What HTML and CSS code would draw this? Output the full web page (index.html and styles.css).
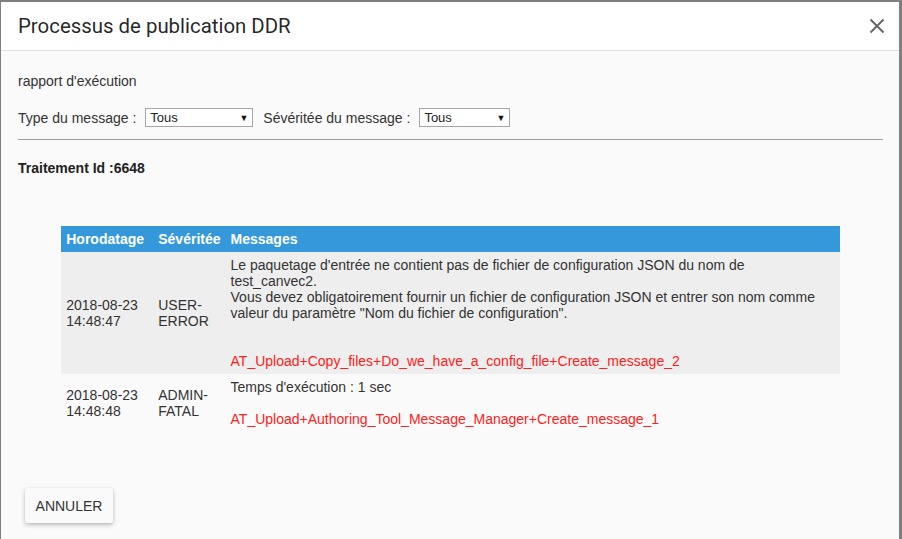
FILE: index.html
```html
<!DOCTYPE html>
<html lang="fr">
<head>
<meta charset="utf-8">
<title>Processus de publication DDR</title>
<link rel="stylesheet" href="styles.css">
</head>
<body>
<div class="dialog">
  <div class="dlg-header">
    <h2 class="dlg-title">Processus de publication DDR</h2>
    <button class="close-btn" aria-label="Fermer">
      <svg width="16" height="16" viewBox="0 0 16 16"><path d="M1.5 1.5 L14.5 14.5 M14.5 1.5 L1.5 14.5" stroke="#666" stroke-width="2" fill="none"/></svg>
    </button>
  </div>
  <div class="dlg-body">
    <div class="report-title">rapport d'exécution</div>
    <div class="filters">
      <span class="flabel">Type du message :</span>
      <div class="fselect sel-type"><span>Tous</span><span class="arrow">▼</span></div>
      <span class="flabel">Sévéritée du message :</span>
      <div class="fselect sel-sev"><span>Tous</span><span class="arrow">▼</span></div>
    </div>
    <hr class="sep">
    <div class="traitement">Traitement Id :6648</div>
    <table class="log">
      <thead>
        <tr><th class="c-date">Horodatage</th><th class="c-sev">Sévéritée</th><th>Messages</th></tr>
      </thead>
      <tbody>
        <tr class="odd">
          <td class="mid">2018-08-23<br>14:48:47</td>
          <td class="mid">USER-<br>ERROR</td>
          <td>Le paquetage d'entrée ne contient pas de fichier de configuration JSON du nom de<br>test_canvec2.<br>Vous devez obligatoirement fournir un fichier de configuration JSON et entrer son nom comme<br>valeur du paramètre "Nom du fichier de configuration".<br><br><br><span class="trace">AT_Upload+Copy_files+Do_we_have_a_config_file+Create_message_2</span></td>
        </tr>
        <tr>
          <td class="mid">2018-08-23<br>14:48:48</td>
          <td class="mid">ADMIN-<br>FATAL</td>
          <td>Temps d'exécution : 1 sec<br><br><span class="trace">AT_Upload+Authoring_Tool_Message_Manager+Create_message_1</span></td>
        </tr>
      </tbody>
    </table>
    <div class="actions">
      <button class="btn-cancel">ANNULER</button>
    </div>
  </div>
</div>
</body>
</html>
```

FILE: styles.css
```css
html, body {
  margin: 0;
  padding: 0;
  height: 100%;
}
body {
  background: #7f7f7f;
  padding: 2px 3px 0 1px;
  box-sizing: border-box;
  font-family: "Liberation Sans", Arial, sans-serif;
  color: #333;
}
.dialog {
  height: 100%;
  background: #fafafa;
  display: flex;
  flex-direction: column;
}
.dlg-header {
  height: 48px;
  background: #fff;
  border-bottom: 1px solid #e0e0e0;
  display: flex;
  align-items: center;
  justify-content: space-between;
  padding: 0 14px 0 17px;
}
.dlg-title {
  margin: 0;
  font-family: Roboto, "Liberation Sans", sans-serif;
  font-weight: 400;
  font-size: 20.4px;
  color: rgba(0,0,0,0.87);
  line-height: 24px;
}
.close-btn {
  border: 0;
  background: transparent;
  padding: 0;
  width: 16px;
  height: 16px;
  display: flex;
}
.dlg-body {
  padding: 0 16px 0 17px;
  flex: 1;
}
.report-title {
  margin-top: 22px;
  font-size: 14px;
  line-height: 16px;
}
.filters {
  margin-top: 19px;
  display: flex;
  align-items: center;
  font-size: 14px;
  height: 19px;
}
.flabel {
  margin-right: 9px;
}
.fselect {
  height: 19px;
  box-sizing: border-box;
  border: 1px solid #a6a6a6;
  background: #fff;
  display: flex;
  align-items: center;
  justify-content: space-between;
  padding: 0 4px 0 4px;
  font-size: 13px;
  color: #222;
}
.fselect .arrow {
  font-size: 9px;
  color: #111;
}
.sel-type { width: 108px; margin-right: 10px; }
.sel-sev { width: 91px; }
.sep {
  margin: 12px 0 0 0;
  border: 0;
  border-top: 1px solid #a0a0a0;
  height: 0;
}
.traitement {
  margin-top: 20px;
  font-size: 14px;
  font-weight: bold;
  line-height: 16px;
  color: #222;
}
.log {
  width: 90%;
  margin: 50px auto 0;
  border-collapse: collapse;
  font-size: 14px;
  line-height: 16px;
}
.log th {
  background: #3498db;
  color: #fff;
  font-weight: bold;
  text-align: left;
  height: 26px;
  padding: 0 5px;
  box-sizing: border-box;
}
.log th.c-date { width: 92px; }
.log th.c-sev { width: 72px; }
.log td {
  padding: 5px 5px;
  vertical-align: top;
  color: #333;
}
.log td.mid { vertical-align: middle; }
.log tr.odd td { background: #eeeeee; }
.trace { color: #ff2020; }
.actions {
  margin-top: 56px;
  padding-left: 7px;
}
.btn-cancel {
  font-family: "Liberation Sans", Arial, sans-serif;
  font-size: 14px;
  color: #333;
  background: #fafafa;
  border: 0;
  border-radius: 2px;
  width: 88px;
  height: 35px;
  box-shadow: 0 2px 4px rgba(0,0,0,0.25), 0 0 1px rgba(0,0,0,0.12);
  padding: 0;
}
```
